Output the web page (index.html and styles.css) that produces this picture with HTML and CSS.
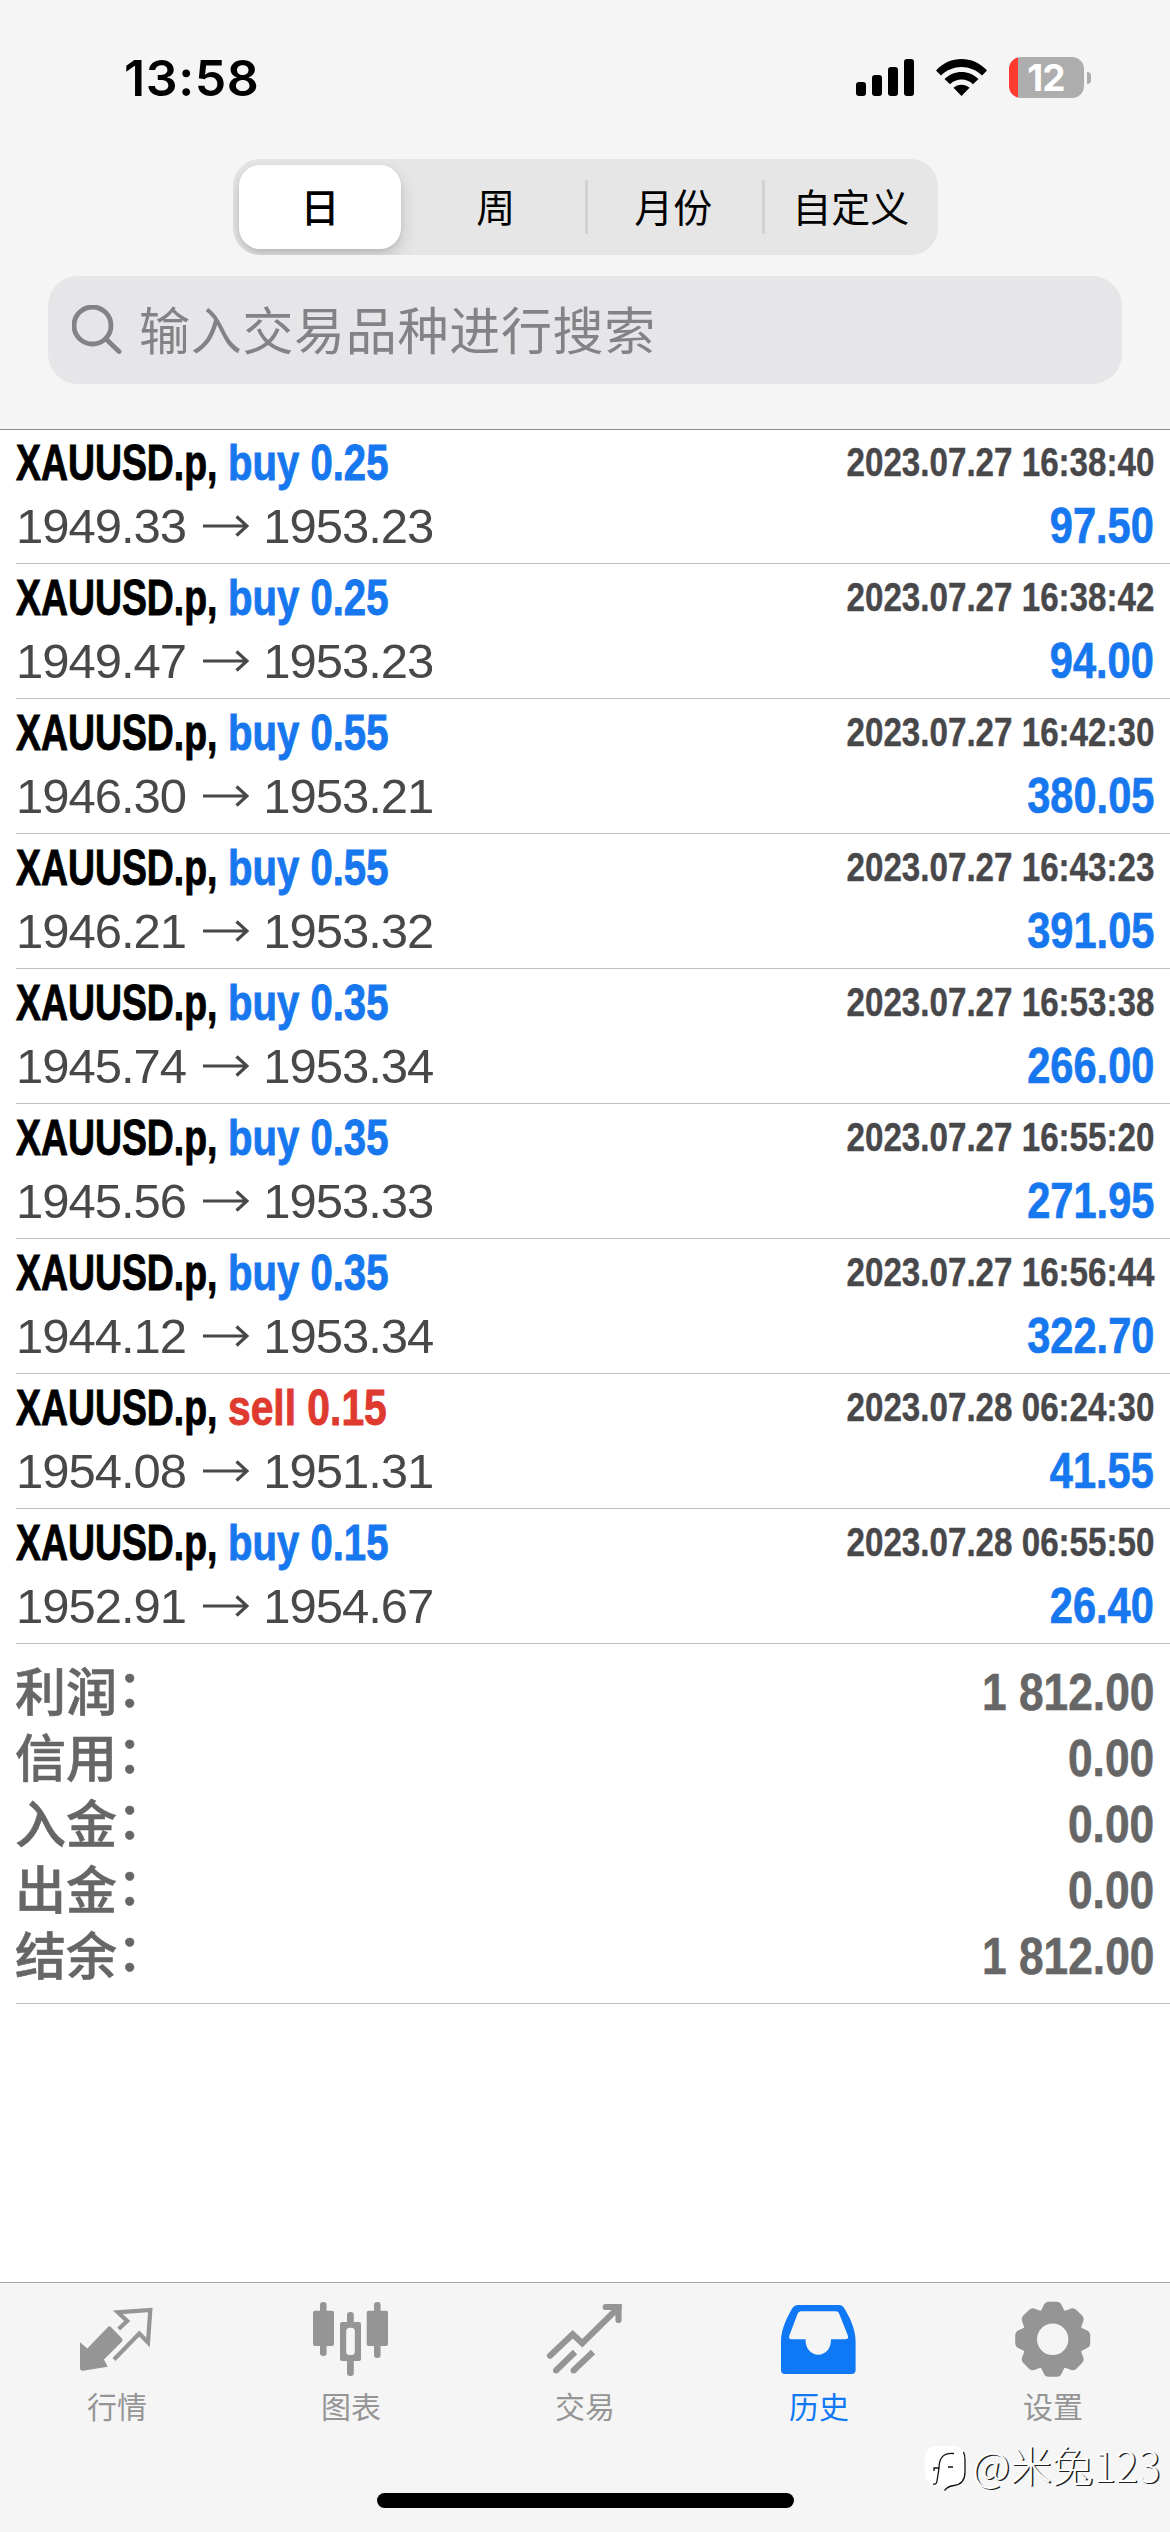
FILE: index.html
```html
<!DOCTYPE html>
<html lang="zh-CN">
<head>
<meta charset="utf-8">
<title>历史</title>
<link rel="stylesheet" href="styles.css">
</head>
<body>
<div class="screen">
  <header class="header">
    <div class="status-bar">
      <span class="clock">13:58</span>
      <div class="status-icons">
        <svg class="signal" width="58" height="38" viewBox="0 0 58 38"><rect x="0" y="23" width="10" height="14" rx="3"/><rect x="16" y="16" width="10" height="21" rx="3"/><rect x="32" y="8" width="10" height="29" rx="3"/><rect x="48" y="0" width="10" height="37" rx="3"/></svg>
        <svg class="wifi" width="51" height="38" viewBox="0 0 51 38"><path d="M0 11.5C14-3.8 37-3.8 51 11.500L46 16.500C34.500 5 16.500 5 5 16.500Z"/><path d="M8.500 20C18 10.500 33 10.500 42.500 20L37 25.200C30.500 19 20.500 19 14 25.200Z"/><path d="M17.500 28.800C22 24.700 29 24.700 33.500 28.800L25.500 37Z"/></svg>
        <div class="battery"><span class="battery-level">12</span></div>
      </div>
    </div>
    <nav class="segments">
      <span class="segment active">日</span><span class="segment">周</span><span class="segment divided">月份</span><span class="segment divided">自定义</span>
    </nav>
    <div class="search">
      <svg width="50" height="50" viewBox="0 0 50 50"><circle cx="20.500" cy="20.500" r="18.500"/><path d="M34 34L47 46.500"/></svg>
      <span class="placeholder">输入交易品种进行搜索</span>
    </div>
  </header>

  <main class="content">
    <ul class="trades" id="trades"></ul>
    <dl class="totals">
      <div><dt>利润<i>：</i></dt><dd>1 812.00</dd></div>
      <div><dt>信用<i>：</i></dt><dd>0.00</dd></div>
      <div><dt>入金<i>：</i></dt><dd>0.00</dd></div>
      <div><dt>出金<i>：</i></dt><dd>0.00</dd></div>
      <div><dt>结余<i>：</i></dt><dd>1 812.00</dd></div>
    </dl>
  </main>

  <footer class="footer">
    <nav class="tabs">
      <a class="tab"><svg viewBox="0 0 80 80"><path d="M3 44.300L10.300 50.500L31 29Q32.500 27.500 34 29L45 40.500Q46 42 45 43.500L27 61.500L30.700 68.700L6 72.700Q3 73 3 70Z"/><path class="line thin" d="M41.700 31L50.200 23L40.800 14.300L73.300 12L71 44.500L62.300 35.500L37 61.500"/></svg><span>行情</span></a>
      <a class="tab"><svg viewBox="0 0 80 80"><rect x="2" y="12.700" width="21" height="35.300" rx="2"/><rect x="9" y="4" width="6.600" height="54" rx="3"/><rect x="36" y="14" width="6.800" height="64" rx="3"/><rect x="29" y="24" width="21" height="39" rx="2"/><rect x="35.200" y="29.700" width="8.600" height="27.300" rx="3.500" class="hole"/><rect x="55.700" y="12.700" width="21.300" height="35.300" rx="2"/><rect x="63" y="4" width="6.600" height="56" rx="3"/></svg><span>图表</span></a>
      <a class="tab"><svg viewBox="0 0 80 80"><path class="line" d="M5 57.700L27.700 36.300L37.300 45.300L73 10"/><path class="line" d="M60.700 9H73.500V22"/><path d="M72 6H76.600V12H72Z"/><path class="line butt" d="M11 72.500L30 54M28.500 72.500L48 54"/><circle cx="11" cy="72.500" r="3"/><circle cx="28.500" cy="72.500" r="3"/></svg><span>交易</span></a>
      <a class="tab current"><svg viewBox="0 0 80 80"><path fill-rule="evenodd" d="M19 7H60Q63.500 7 65 10C70 17.500 76.600 31 76.600 43V72Q76.600 76 72.500 76H6Q2 76 2 72V43C2 31 9 17.500 13.500 10Q15.500 7 19 7ZM22 13.300Q19.500 13.300 18.500 16L10.200 38Q9.500 41.300 12.500 41.300H26.500C26.500 51 32 56.700 39.300 56.700S52 51 52 41.300H66.500Q69.500 41.300 69 38L60.300 16Q59.500 13.300 57 13.300Z"/></svg><span>历史</span></a>
      <a class="tab"><svg viewBox="0 0 80 80"><defs><path id="tooth" d="M-15 -25Q-10.500 -29 -9.500 -33Q-8 -37.500 -4 -37.500H4Q8 -37.500 9.500 -33Q10.500 -29 15 -25Z"/></defs><g transform="translate(39.700 41.300)"><circle r="22.500" class="ring"/><use href="#tooth"/><use href="#tooth" transform="rotate(45)"/><use href="#tooth" transform="rotate(90)"/><use href="#tooth" transform="rotate(135)"/><use href="#tooth" transform="rotate(180)"/><use href="#tooth" transform="rotate(225)"/><use href="#tooth" transform="rotate(270)"/><use href="#tooth" transform="rotate(315)"/></g></svg><span>设置</span></a>
    </nav>
    <div class="home-indicator"></div>
  </footer>

  <div class="watermark">
    <svg width="44" height="48" viewBox="0 0 44 48"><path d="M14 2H28Q41 2 41 16V28Q41 42 28 42L20 47L19 42H14Q1 42 1 28V16Q1 2 14 2Z" fill="#fff"/><path d="M39.500 8Q41 11 41 16V28Q41 40 30 41.500Q24 42 20.500 46.500M30 9.500Q15 8 15 24H10V27M15 24L13 37Q12.500 41 9 40M24 23H29" fill="none" stroke="#111" stroke-width="1.300"/></svg>
    <span>@米兔123</span>
  </div>
</div>
<script src="trades.js"></script>
</body>
</html>
```
FILE: trades.js
```js
const trades = [
  ["buy", "0.25", "2023.07.27 16:38:40", "1949.33", "1953.23", "97.50"],
  ["buy", "0.25", "2023.07.27 16:38:42", "1949.47", "1953.23", "94.00"],
  ["buy", "0.55", "2023.07.27 16:42:30", "1946.30", "1953.21", "380.05"],
  ["buy", "0.55", "2023.07.27 16:43:23", "1946.21", "1953.32", "391.05"],
  ["buy", "0.35", "2023.07.27 16:53:38", "1945.74", "1953.34", "266.00"],
  ["buy", "0.35", "2023.07.27 16:55:20", "1945.56", "1953.33", "271.95"],
  ["buy", "0.35", "2023.07.27 16:56:44", "1944.12", "1953.34", "322.70"],
  ["sell", "0.15", "2023.07.28 06:24:30", "1954.08", "1951.31", "41.55"],
  ["buy", "0.15", "2023.07.28 06:55:50", "1952.91", "1954.67", "26.40"]
];

document.getElementById("trades").innerHTML = trades.map(([side, volume, time, open, close, profit]) => `
  <li class="trade">
    <div class="trade-top">
      <span class="symbol">XAUUSD.p,</span>
      <span class="action ${side}">${side} ${volume}</span>
      <span class="time">${time}</span>
    </div>
    <div class="trade-bottom">
      <span class="price">${open}</span>
      <svg class="arrow" width="46" height="22" viewBox="0 0 46 22"><path d="M0 11H44M33.500 1.500L44 11L33.500 20.500"/></svg>
      <span class="price">${close}</span>
      <span class="profit">${profit}</span>
    </div>
  </li>`).join("");
```
FILE: styles.css
```css
* { box-sizing: border-box; margin: 0; padding: 0; }

body {
  background: #fff;
  font-family: "Liberation Sans", "Noto Sans CJK SC", sans-serif;
}

.screen {
  position: relative;
  display: flex;
  flex-direction: column;
  width: 1170px;
  height: 2532px;
  overflow: hidden;
}

.header {
  height: 430px;
  background: #f5f5f5;
  border-bottom: 1px solid #8e8e8e;
}

.status-bar {
  display: flex;
  justify-content: space-between;
  height: 159px;
  padding: 57px 86px 0 124px;
}

.clock {
  font: 600 50px/42px "Inter", sans-serif;
  letter-spacing: .6px;
}

.status-icons { display: flex; align-items: flex-start; }
.signal { margin: 2px 22.500px 0 0; }
.wifi { margin: 2px 22px 0 0; }

.battery {
  position: relative;
  width: 75px;
  height: 41px;
  border-radius: 12px;
  background: linear-gradient(90deg, #ff3b30 9.500px, #adadad 9.500px);
}

.battery::after {
  content: "";
  position: absolute;
  left: 78px;
  top: 15px;
  width: 4px;
  height: 12px;
  border-radius: 0 5px 5px 0;
  background: #adadad;
}

.battery-level {
  display: block;
  padding-right: 1px;
  font: 700 37px/41px "Inter", sans-serif;
  letter-spacing: -1px;
  text-align: center;
  color: #fff;
}

.segments {
  display: flex;
  width: 705px;
  height: 96px;
  margin-left: 233px;
  padding: 6px 0 6px 6px;
  border-radius: 27px;
  background: #e6e6e6;
  overflow: hidden;
}

.segment {
  position: relative;
  flex: none;
  width: 177.500px;
  font: 400 39px/81px "Noto Sans CJK SC", sans-serif;
  text-align: center;
}

.segment.active {
  width: 162px;
  margin-right: 6px;
  border-radius: 21px;
  background: #fff;
  box-shadow: 0 8px 18px rgba(0, 0, 0, .16), 0 2px 4px rgba(0, 0, 0, .08);
  font-weight: 500;
}

.segment.divided::before {
  content: "";
  position: absolute;
  left: 0;
  top: 15px;
  width: 3px;
  height: 54px;
  border-radius: 2px;
  background: #d2d2d3;
}

.search {
  display: flex;
  align-items: center;
  height: 108px;
  margin: 21px 48px 0;
  padding-left: 24px;
  border-radius: 30px;
  background: #e6e6e8;
}

.search svg {
  fill: none;
  stroke: #838386;
  stroke-width: 4.800;
  stroke-linecap: round;
}

.placeholder {
  margin-left: 17px;
  padding-bottom: 4px;
  font: 400 51px/100px "Noto Sans CJK SC", sans-serif;
  letter-spacing: .7px;
  color: #838386;
}

.content { flex: 1; margin: -1px 0 0 16px; }
.trades { list-style: none; }

.trade {
  height: 135px;
  padding-right: 16px;
  border-bottom: 1px solid #bfc0c2;
  white-space: nowrap;
}

.trade-top,
.trade-bottom { display: flex; }

.trade-top { height: 68px; line-height: 68px; }
.trade-bottom { height: 58px; line-height: 58px; align-items: center; }

.symbol,
.action {
  font-size: 49.500px;
  font-weight: 700;
  transform-origin: left;
  -webkit-text-stroke: .9px currentColor;
}

.symbol { width: 212px; transform: scaleX(.755); }
.action { transform: scaleX(.81); }
.action.sell { transform: scaleX(.824); }
.buy, .profit { color: #1777ee; }
.sell { color: #df3a30; }

.time {
  margin-left: auto;
  font-size: 40px;
  line-height: 66px;
  font-weight: 700;
  color: #48484b;
  transform: scaleX(.829);
  transform-origin: right;
  -webkit-text-stroke: .4px currentColor;
}

.price {
  font-size: 49px;
  letter-spacing: -1px;
  color: #48484b;
}

.arrow { margin: 0 14.500px 0 16.500px; fill: none; stroke: #48484b; stroke-width: 3.200; }

.profit {
  margin-left: auto;
  font-size: 49.500px;
  font-weight: 700;
  transform: scaleX(.84);
  transform-origin: right;
  -webkit-text-stroke: .7px currentColor;
}

.totals {
  height: 360px;
  padding: 15px 16px 0 0;
  border-bottom: 1px solid #bfc0c2;
  color: #666;
}

.totals div { display: flex; justify-content: space-between; height: 66px; }

.totals dt {
  margin-left: -1px;
  font: 500 51px/60px "Noto Sans CJK SC", sans-serif;
  -webkit-text-stroke: .6px currentColor;
}

.totals i { position: relative; top: -4px; font-style: normal; }

.totals dd {
  font-size: 52px;
  line-height: 66px;
  font-weight: 700;
  transform: scaleX(.852);
  transform-origin: right;
  -webkit-text-stroke: .6px currentColor;
}

.footer {
  height: 250px;
  background: #f5f5f5;
  border-top: 1px solid #a8a8a8;
}

.tabs { display: flex; height: 210px; padding-top: 15px; }

.tab {
  display: flex;
  flex: 1;
  flex-direction: column;
  align-items: center;
  color: #959595;
}

.tab svg { width: 80px; height: 80px; fill: currentColor; }
.tab span { font: 400 30px/54px "Noto Sans CJK SC", sans-serif; }
.tab.current { color: #0f78f5; }
.tab svg .hole { fill: #f5f5f5; }
.tab svg .line { fill: none; stroke: currentColor; stroke-width: 6.200; stroke-linecap: round; }
.tab svg .line.thin { stroke-width: 4.200; stroke-linecap: butt; }
.tab svg .line.butt { stroke-linecap: butt; }
.tab svg .ring { fill: none; stroke: currentColor; stroke-width: 13.600; }

.home-indicator {
  width: 417px;
  height: 15px;
  margin-left: 377px;
  border-radius: 8px;
  background: #000;
}

.watermark {
  position: absolute;
  left: 924px;
  top: 2444px;
  display: flex;
  white-space: nowrap;
}

.watermark span {
  margin-left: 4px;
  font: 300 41.700px/40px "Noto Sans CJK SC", sans-serif;
  color: #fff;
  text-shadow: 1.500px 1px 0 #222;
}
```
